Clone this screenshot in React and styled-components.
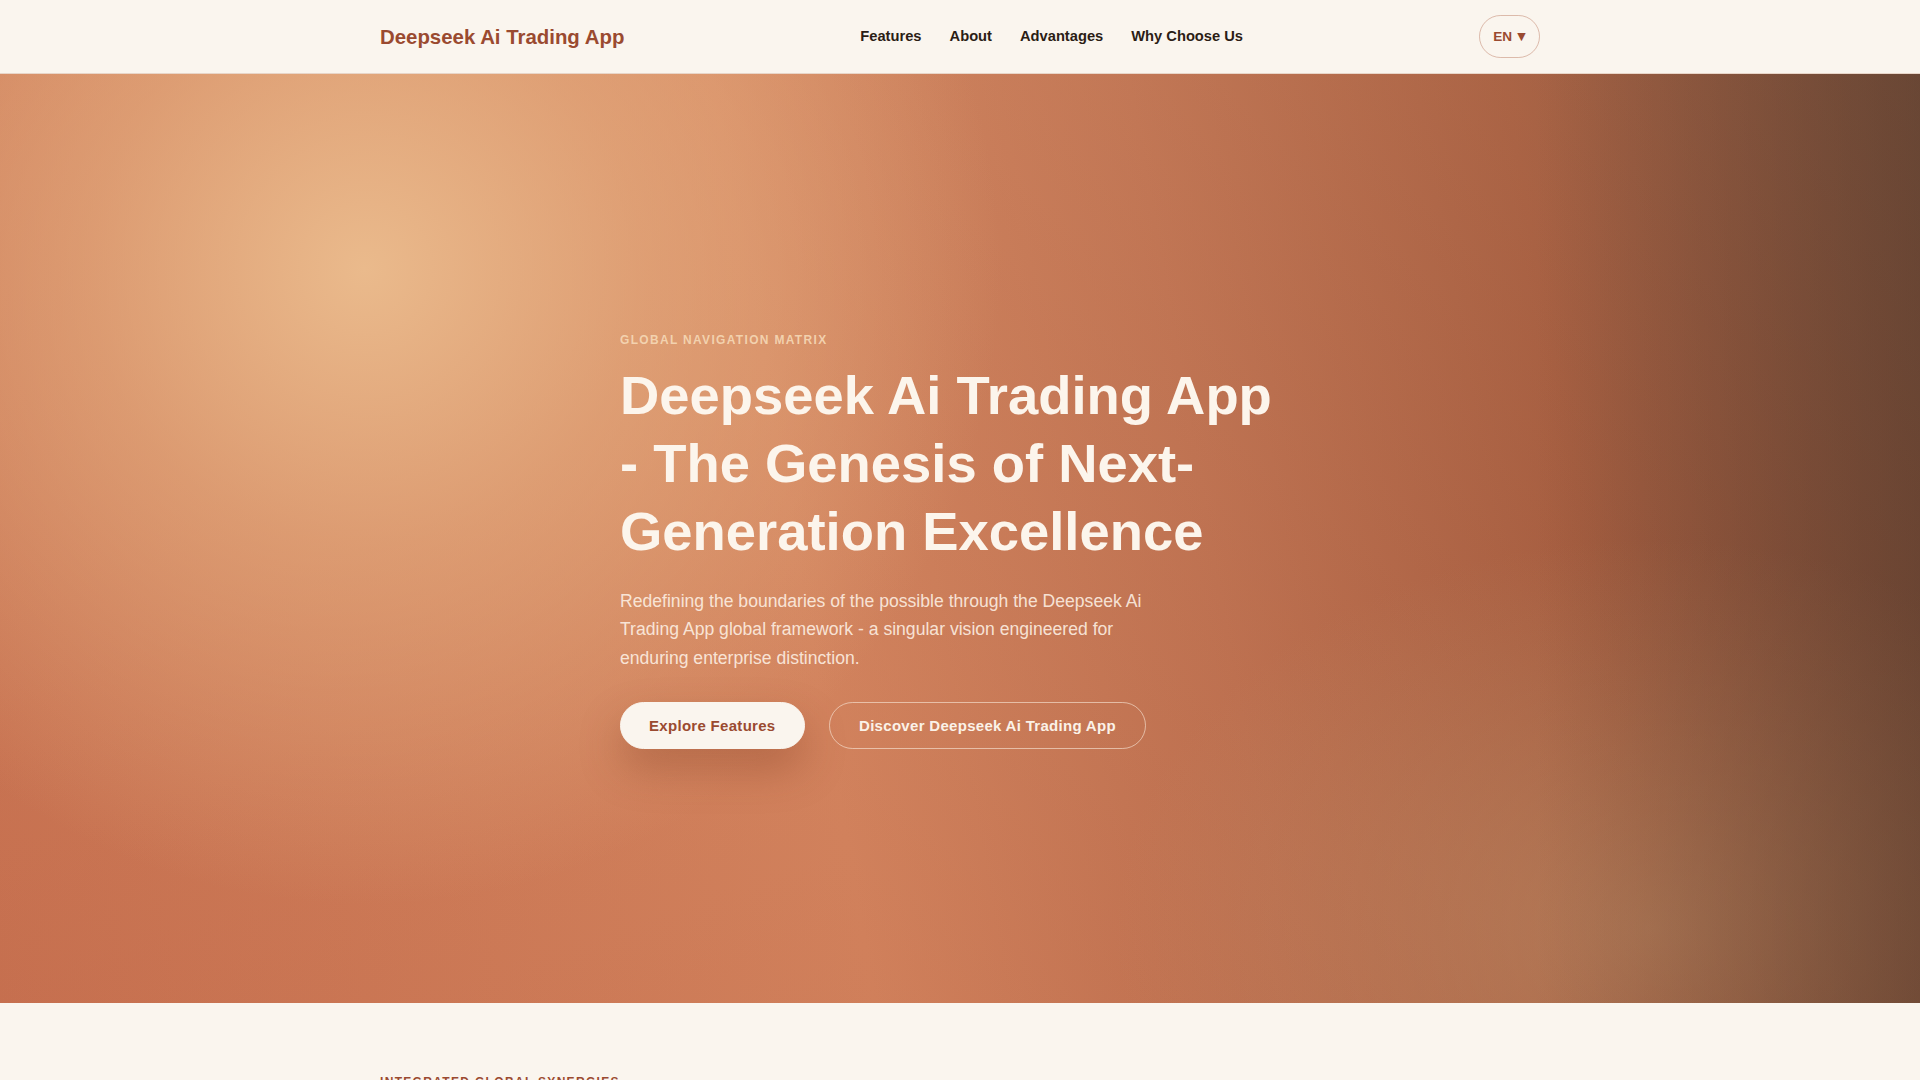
import React from "react";
import styled, { createGlobalStyle } from "styled-components";

const Global = createGlobalStyle`
  *, *::before, *::after { box-sizing: border-box; }
  html, body { margin: 0; padding: 0; }
  body {
    background: #faf5ee;
    font-family: "Liberation Sans", Arial, sans-serif;
    color: #2b1d15;
    -webkit-font-smoothing: antialiased;
  }
`;

const Header = styled.header`
  background: #faf5ee;
  border-bottom: 1px solid rgba(170, 100, 70, 0.22);
`;

const HeaderInner = styled.div`
  max-width: 1160px;
  margin: 0 auto;
  height: 73px;
  display: flex;
  align-items: center;
  justify-content: space-between;
`;

const Logo = styled.a`
  font-size: 20.4px;
  font-weight: 700;
  color: #9a4a30;
  text-decoration: none;
  margin-top: 1px;
`;

const Nav = styled.nav`
  display: flex;
  gap: 28px;
  margin-top: -1px;
`;

const NavLink = styled.a`
  font-size: 14.7px;
  font-weight: 700;
  color: #2b1d15;
  text-decoration: none;
`;

const LangButton = styled.button`
  height: 43px;
  width: 61px;
  border-radius: 999px;
  border: 1px solid rgba(170, 90, 60, 0.38);
  background: transparent;
  color: #9a4a30;
  font-family: inherit;
  font-size: 13.6px;
  font-weight: 700;
  display: inline-flex;
  align-items: center;
  justify-content: center;
  gap: 5px;
  padding: 0;
`;

const Caret = styled.span`
  font-size: 11px;
  font-family: "DejaVu Sans", sans-serif;
`;

const Hero = styled.section`
  min-height: 929px;
  display: flex;
  align-items: center;
  background:
    linear-gradient(90deg, rgba(80, 52, 38, 0) 80%, rgba(80, 56, 42, 0.5) 100%),
    radial-gradient(circle at 19% 21%, rgba(234, 186, 140, 1) 0%, rgba(230, 176, 130, 0.6) 16%, rgba(225, 160, 115, 0) 37%),
    radial-gradient(ellipse 28% 42% at 86% 92%, rgba(190, 150, 110, 0.5) 0%, rgba(190, 150, 110, 0) 100%),
    linear-gradient(180deg, rgba(220, 150, 110, 0.22) 0%, rgba(185, 95, 65, 0.15) 100%),
    linear-gradient(80deg, #c87251 0%, #d4855f 42%, #bb6f4f 62%, #9d563a 80%, #6a4332 100%);
`;

const HeroInner = styled.div`
  width: 680px;
  margin: 0 auto;
  padding-top: 3px;
`;

const Eyebrow = styled.p`
  margin: 0 0 13px;
  font-size: 12px;
  line-height: 18px;
  font-weight: 700;
  letter-spacing: 0.11em;
  text-transform: uppercase;
  color: ${(p) => p.$color || "rgba(246, 218, 184, 0.88)"};
`;

const Title = styled.h1`
  margin: 0;
  font-size: 54.4px;
  line-height: 68px;
  font-weight: 700;
  color: #fcf5ec;
`;

const Lead = styled.p`
  margin: 21px 0 0;
  max-width: 550px;
  font-size: 17.6px;
  line-height: 28.2px;
  color: rgba(253, 240, 228, 0.9);
`;

const Actions = styled.div`
  display: flex;
  gap: 24px;
  margin-top: 30px;
`;

const Button = styled.a`
  display: inline-flex;
  align-items: center;
  justify-content: center;
  height: 47px;
  padding: 0 ${(p) => (p.$primary ? "28px" : "29.5px")};
  border-radius: 999px;
  font-size: 15px;
  font-weight: 700;
  letter-spacing: 0.02em;
  text-decoration: none;
  background: ${(p) => (p.$primary ? "#faf5ee" : "transparent")};
  color: ${(p) => (p.$primary ? "#9a4a30" : "#fbf2e8")};
  border: 1px solid ${(p) => (p.$primary ? "#faf5ee" : "rgba(250, 235, 220, 0.6)")};
  box-shadow: ${(p) => (p.$primary ? "0 20px 40px rgba(130, 60, 35, 0.35)" : "none")};
`;

const Section = styled.section`
  background: #faf5ee;
  padding: 70px 0 80px;
`;

const SectionInner = styled.div`
  max-width: 1160px;
  margin: 0 auto;
`;

export default function App() {
  return (
    <>
      <Global />
      <Header>
        <HeaderInner>
          <Logo href="#">Deepseek Ai Trading App</Logo>
          <Nav>
            <NavLink href="#">Features</NavLink>
            <NavLink href="#">About</NavLink>
            <NavLink href="#">Advantages</NavLink>
            <NavLink href="#">Why Choose Us</NavLink>
          </Nav>
          <LangButton>
            EN <Caret>▼</Caret>
          </LangButton>
        </HeaderInner>
      </Header>
      <Hero>
        <HeroInner>
          <Eyebrow>Global Navigation Matrix</Eyebrow>
          <Title>Deepseek Ai Trading App - The Genesis of Next-Generation Excellence</Title>
          <Lead>
            Redefining the boundaries of the possible through the Deepseek Ai Trading App global
            framework - a singular vision engineered for enduring enterprise distinction.
          </Lead>
          <Actions>
            <Button $primary href="#">Explore Features</Button>
            <Button href="#">Discover Deepseek Ai Trading App</Button>
          </Actions>
        </HeroInner>
      </Hero>
      <Section>
        <SectionInner>
          <Eyebrow $color="#9a4a30">Integrated Global Synergies</Eyebrow>
        </SectionInner>
      </Section>
    </>
  );
}
